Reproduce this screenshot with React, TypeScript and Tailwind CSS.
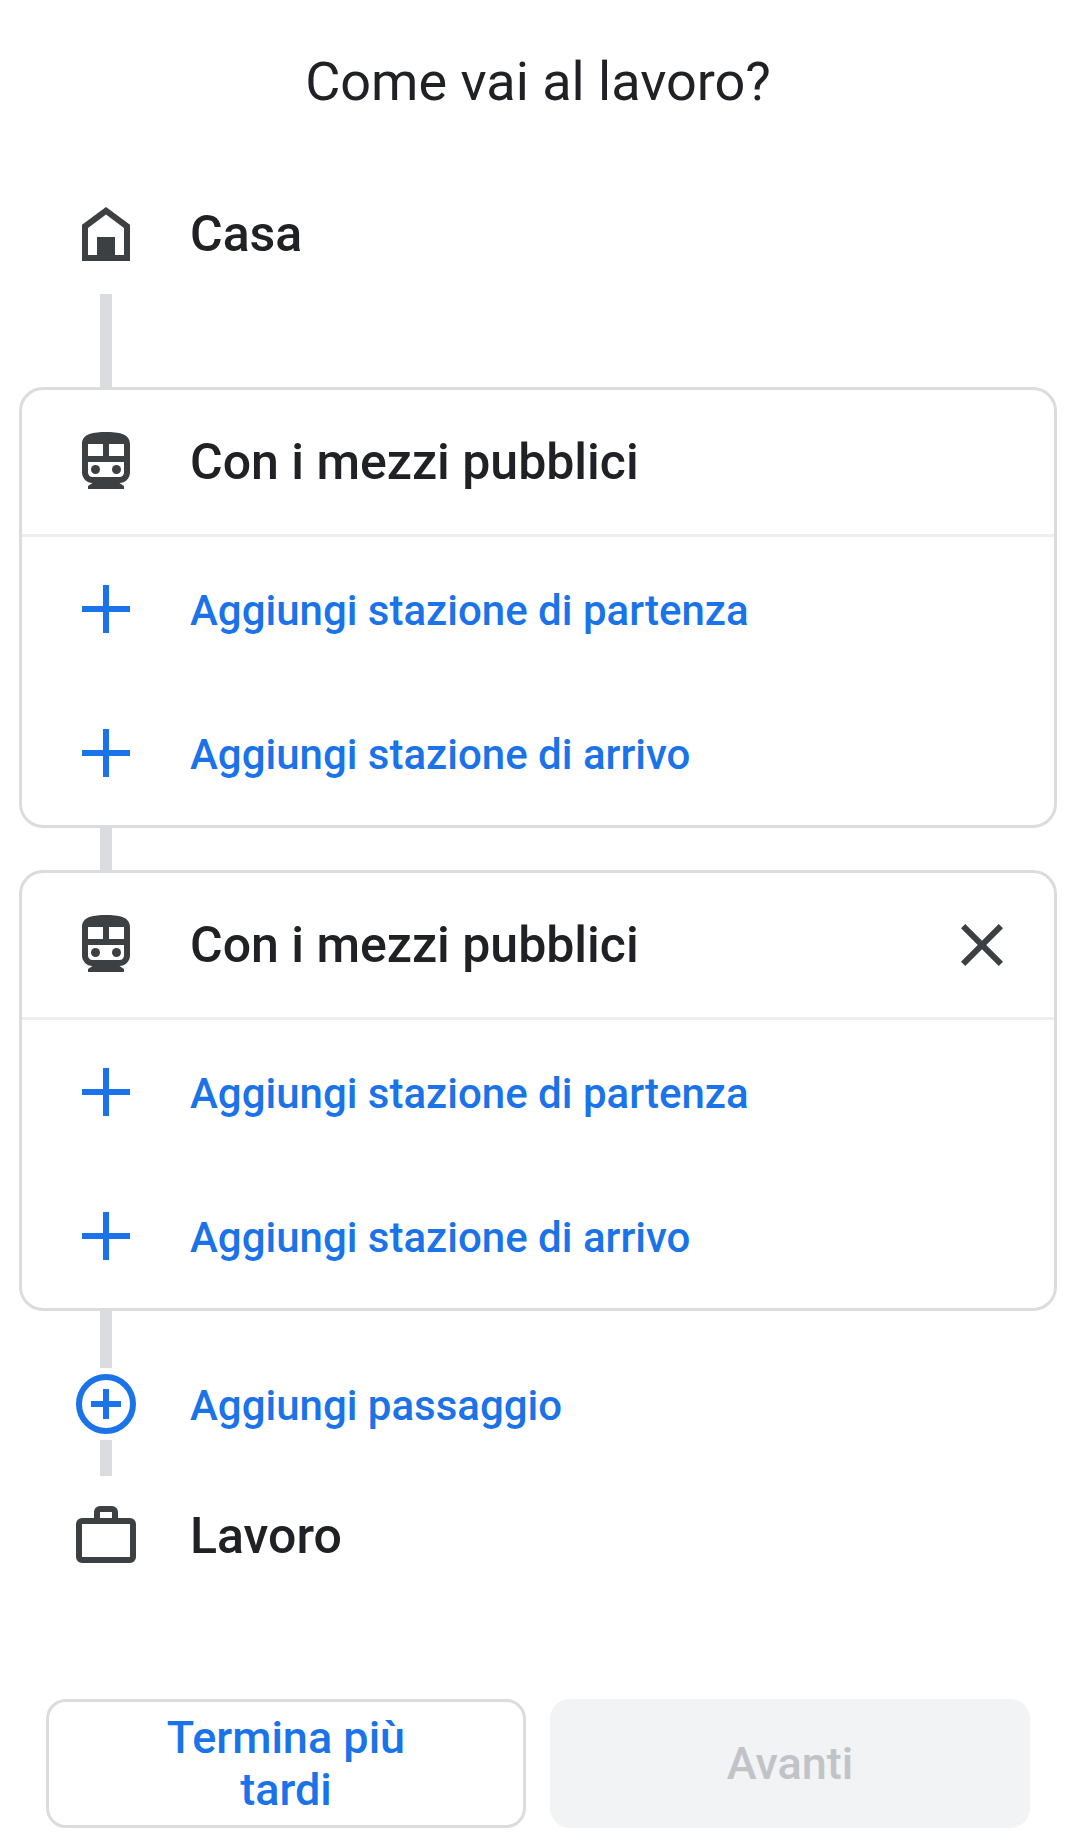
import type { ReactNode } from "react";

function Icon({ children, className }: { children: ReactNode; className: string }) {
  return (
    <svg viewBox="0 0 24 24" aria-hidden="true" fill="currentColor" className={`size-[72px] shrink-0 ${className}`}>
      {children}
    </svg>
  );
}

function HomeIcon() {
  return (
    <Icon className="text-[#3c4043]">
      <path fillRule="evenodd" d="M12 3 4 8.9V21h16V8.9L12 3Zm0 2.5 6 4.5v9h-3v-6H9v6H6v-9l6-4.5Z" />
    </Icon>
  );
}

function TrainIcon() {
  return (
    <Icon className="text-[#3c4043]">
      <path
        fillRule="evenodd"
        d="M12 2c-4 0-8 .5-8 4v9.5C4 17.43 5.57 19 7.5 19L6 20v1h12v-1l-1.5-1c1.93 0 3.5-1.57 3.5-3.5V6c0-3.5-4-4-8-4ZM6 6h5v4H6V6Zm7 0h5v4h-5V6ZM6 12h12v3.5c0 .83-.67 1.5-1.5 1.5h-9C6.67 17 6 16.33 6 15.5V12Z"
      />
      <circle cx="8.5" cy="14.5" r="1.5" />
      <circle cx="15.5" cy="14.5" r="1.5" />
    </Icon>
  );
}

function PlusIcon() {
  return (
    <Icon className="text-[#1a73e8]">
      <path d="M11 4h2v7h7v2h-7v7h-2v-7H4v-2h7V4Z" />
    </Icon>
  );
}

function PlusCircleIcon() {
  return (
    <Icon className="text-[#1a73e8]">
      <circle cx="12" cy="12" r="9" fill="none" stroke="currentColor" strokeWidth="2" />
      <path d="M11 7h2v4h4v2h-4v4h-2v-4H7v-2h4V7Z" />
    </Icon>
  );
}

function WorkIcon() {
  return (
    <Icon className="text-[#3c4043]">
      <path
        fillRule="evenodd"
        d="M10 2h4a2 2 0 0 1 2 2v2h4a2 2 0 0 1 2 2v11a2 2 0 0 1-2 2H4a2 2 0 0 1-2-2V8a2 2 0 0 1 2-2h4V4a2 2 0 0 1 2-2Zm0 2v2h4V4h-4ZM4 8v11h16V8H4Z"
      />
    </Icon>
  );
}

function CloseIcon() {
  return (
    <Icon className="text-[#3c4043]">
      <path d="M19 6.41 17.59 5 12 10.59 6.41 5 5 6.41 10.59 12 5 17.59 6.41 19 12 13.41 17.59 19 19 17.59 13.41 12 19 6.41Z" />
    </Icon>
  );
}

const connector = "ml-[81px] w-3 bg-[#dadce0]";
const heading = "text-[50px] leading-[60px] font-medium text-[#202124]";
const addAction = "flex w-full items-center gap-12 text-left text-[42px] leading-[60px] font-medium text-[#1a73e8]";

function AddRow({ label }: { label: string }) {
  return (
    <button type="button" className={`${addAction} h-36 pl-12`}>
      <PlusIcon />
      <span className="pt-1">{label}</span>
    </button>
  );
}

function TransitCard({ removable = false }: { removable?: boolean }) {
  return (
    <section className="rounded-3xl border-3 border-[#dadce0]">
      <header className="flex h-[147px] items-center gap-12 border-b-3 border-[#eeeeee] pr-9 pl-12">
        <TrainIcon />
        <h2 className={`flex-1 ${heading}`}>Con i mezzi pubblici</h2>
        {removable && (
          <button type="button" aria-label="Rimuovi">
            <CloseIcon />
          </button>
        )}
      </header>
      <AddRow label="Aggiungi stazione di partenza" />
      <AddRow label="Aggiungi stazione di arrivo" />
    </section>
  );
}

export default function App() {
  return (
    <main className="min-h-screen bg-white pt-12 pr-[21px] pb-5 pl-[19px] font-['Roboto',sans-serif]">
      <h1 className="text-center text-[54px] leading-[68px] text-[#202124]">Come vai al lavoro?</h1>

      <div className="mt-[58px] flex h-[120px] items-center gap-12 pl-[51px]">
        <HomeIcon />
        <h2 className={heading}>Casa</h2>
      </div>
      <div className={`${connector} h-[93px]`} />
      <TransitCard />
      <div className={`${connector} h-[42px]`} />
      <TransitCard removable />
      <div className={`${connector} h-[57px]`} />
      <button type="button" className={`${addAction} h-[72px] pl-[51px]`}>
        <PlusCircleIcon />
        <span className="pt-1">Aggiungi passaggio</span>
      </button>
      <div className={`${connector} h-9`} />
      <div className="mt-6 flex h-[72px] items-center gap-12 pl-[51px]">
        <WorkIcon />
        <h2 className={heading}>Lavoro</h2>
      </div>

      <div className="mt-[127px] grid grid-cols-2 gap-6 px-[27px]">
        <button type="button" className="h-[129px] rounded-[20px] border-3 border-[#dadce0] px-24 text-[45px] leading-[52px] font-medium text-[#1a73e8]">
          Termina più tardi
        </button>
        <button type="button" disabled className="h-[129px] rounded-[20px] bg-[#f1f3f4] text-[45px] leading-[52px] font-medium text-[#c1c3c7]">
          Avanti
        </button>
      </div>
    </main>
  );
}
